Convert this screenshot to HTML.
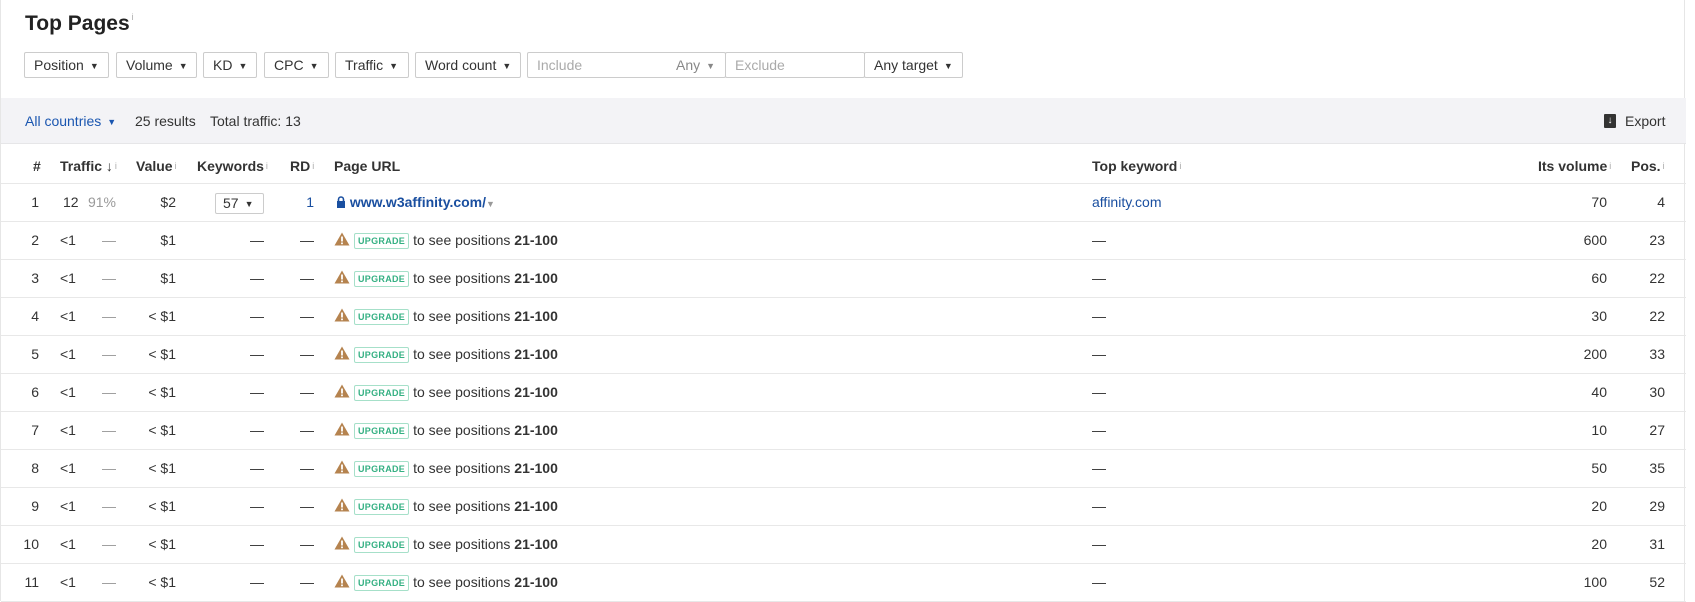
<!DOCTYPE html>
<html><head><meta charset="utf-8">
<style>
*{box-sizing:border-box;margin:0;padding:0}
body{width:1695px;height:601px;overflow:hidden;background:#fff;font-family:"Liberation Sans",Arial,sans-serif;font-size:14px;color:#333;position:relative}
.wrap{position:absolute;left:0;top:0;width:1685px;height:601px;border-left:1px solid #e6e6e6;border-right:1px solid #e6e6e6}
.abs{position:absolute;white-space:nowrap}
h1{position:absolute;left:24px;top:12px;font-size:21px;font-weight:bold;color:#222}
sup.i{font-size:9px;color:#aaa;font-weight:normal;vertical-align:top;margin-left:2px}
.btn{position:absolute;top:52px;height:26px;border:1px solid #ccc;border-radius:2px;line-height:24px;padding-left:9px;color:#333;font-size:14px;background:#fff}
.ar{font-size:9px;margin-left:6px;position:relative;top:-1px}
.band{position:absolute;left:0;top:98px;width:1685px;height:46px;background:#f3f3f6;border-bottom:1px solid #e6e6e8}
.row{position:absolute;left:0;width:1685px;height:38px;border-bottom:1px solid #e8e8e8}
.c{position:absolute;top:0;line-height:37px;white-space:nowrap}
.hd{font-weight:bold;color:#333}
.g{color:#999}
.blue{color:#1a4fa0}
.up{display:inline-block;border:1px solid #a6e0c9;color:#35b083;font-size:9px;font-weight:bold;padding:0 3px;line-height:14px;border-radius:2px;letter-spacing:.3px;vertical-align:1px;margin:0 4px}
.n{right:1647px}.t{left:59px}.p{right:1570px}.v{right:1510px}.k{right:1422px}.r{right:1372px}.u{left:333px}.tk{left:1091px}.iv{right:79px}.ps{right:21px}
</style></head><body>
<svg width="0" height="0" style="position:absolute"><defs><symbol id="w" viewBox="0 0 16 14"><path d="M8 0.5L15.5 13.5H0.5Z" fill="#b5834f"/><rect x="7.1" y="4.5" width="1.8" height="5" fill="#fff"/><rect x="7.1" y="10.5" width="1.8" height="1.7" fill="#fff"/></symbol></defs></svg>
<div class="wrap">
<h1>Top Pages<sup class="i">i</sup></h1>
<div class="btn" style="left:23px;width:85px">Position<span class="ar">▼</span></div>
<div class="btn" style="left:115px;width:81px">Volume<span class="ar">▼</span></div>
<div class="btn" style="left:202px;width:54px">KD<span class="ar">▼</span></div>
<div class="btn" style="left:263px;width:65px">CPC<span class="ar">▼</span></div>
<div class="btn" style="left:334px;width:74px">Traffic<span class="ar">▼</span></div>
<div class="btn" style="left:414px;width:106px">Word count<span class="ar">▼</span></div>
<div class="btn" style="left:526px;width:199px;color:#aaa">Include<span class="abs" style="left:148px;color:#888">Any<span class="ar">▼</span></span></div>
<div class="btn" style="left:724px;width:140px;color:#aaa">Exclude</div>
<div class="btn" style="left:863px;width:99px">Any target<span class="ar">▼</span></div>

<div class="band">
<div class="abs" style="left:24px;top:15px;color:#1a56b0">All countries<span class="ar">▼</span></div>
<div class="abs" style="left:134px;top:15px">25 results</div>
<div class="abs" style="left:209px;top:15px">Total traffic: 13</div>
<div class="abs" style="left:1603px;top:16px;width:12px;height:14px;background:#333;border-radius:1px;color:#fff;font-size:10px;line-height:14px;text-align:center;font-weight:bold">↓</div>
<div class="abs" style="left:1624px;top:15px">Export</div>
</div>

<div class="row hd" style="top:145px;height:39px">
<div class="c" style="left:32px;line-height:42px">#</div>
<div class="c" style="left:59px;line-height:42px">Traffic ↓<sup class="i">i</sup></div>
<div class="c" style="left:135px;line-height:42px">Value<sup class="i">i</sup></div>
<div class="c" style="left:196px;line-height:42px">Keywords<sup class="i">i</sup></div>
<div class="c" style="left:289px;line-height:42px">RD<sup class="i">i</sup></div>
<div class="c" style="left:333px;line-height:42px">Page URL</div>
<div class="c" style="left:1091px;line-height:42px">Top keyword<sup class="i">i</sup></div>
<div class="c" style="left:1537px;line-height:42px">Its volume<sup class="i">i</sup></div>
<div class="c" style="left:1630px;line-height:42px">Pos.<sup class="i">i</sup></div>
</div>

<div class="row" style="top:184px"><div class="c n">1</div><div class="c" style="left:62px">12</div><div class="c g p">91%</div><div class="c v">$2</div>
<div class="abs" style="left:214px;top:9px;width:49px;height:21px;border:1px solid #ccc;border-radius:2px;line-height:19px;padding-left:7px">57<span class="ar">▼</span></div>
<div class="c blue r">1</div>
<div class="c" style="left:335px"><svg width="10" height="12" viewBox="0 0 10 12" style="vertical-align:-1px"><path d="M2.5 5V3.5a2.5 2.5 0 0 1 5 0V5" stroke="#1a4fa0" stroke-width="1.6" fill="none"/><rect x="1" y="5" width="8" height="7" fill="#1a4fa0"/></svg> <b class="blue">www.w3affinity.com/</b><span style="color:#999;font-size:9px">▼</span></div>
<div class="c blue tk">affinity.com</div><div class="c iv">70</div><div class="c ps">4</div></div>

<div class="row" style="top:222px"><div class="c n">2</div><div class="c t">&lt;1</div><div class="c g p">—</div><div class="c v">$1</div><div class="c k">—</div><div class="c r">—</div><div class="c u"><svg width="16" height="14" style="vertical-align:-1px"><use href="#w"/></svg><span class="up">UPGRADE</span>to see positions <b>21-100</b></div><div class="c tk">—</div><div class="c iv">600</div><div class="c ps">23</div></div>
<div class="row" style="top:260px"><div class="c n">3</div><div class="c t">&lt;1</div><div class="c g p">—</div><div class="c v">$1</div><div class="c k">—</div><div class="c r">—</div><div class="c u"><svg width="16" height="14" style="vertical-align:-1px"><use href="#w"/></svg><span class="up">UPGRADE</span>to see positions <b>21-100</b></div><div class="c tk">—</div><div class="c iv">60</div><div class="c ps">22</div></div>
<div class="row" style="top:298px"><div class="c n">4</div><div class="c t">&lt;1</div><div class="c g p">—</div><div class="c v">&lt; $1</div><div class="c k">—</div><div class="c r">—</div><div class="c u"><svg width="16" height="14" style="vertical-align:-1px"><use href="#w"/></svg><span class="up">UPGRADE</span>to see positions <b>21-100</b></div><div class="c tk">—</div><div class="c iv">30</div><div class="c ps">22</div></div>
<div class="row" style="top:336px"><div class="c n">5</div><div class="c t">&lt;1</div><div class="c g p">—</div><div class="c v">&lt; $1</div><div class="c k">—</div><div class="c r">—</div><div class="c u"><svg width="16" height="14" style="vertical-align:-1px"><use href="#w"/></svg><span class="up">UPGRADE</span>to see positions <b>21-100</b></div><div class="c tk">—</div><div class="c iv">200</div><div class="c ps">33</div></div>
<div class="row" style="top:374px"><div class="c n">6</div><div class="c t">&lt;1</div><div class="c g p">—</div><div class="c v">&lt; $1</div><div class="c k">—</div><div class="c r">—</div><div class="c u"><svg width="16" height="14" style="vertical-align:-1px"><use href="#w"/></svg><span class="up">UPGRADE</span>to see positions <b>21-100</b></div><div class="c tk">—</div><div class="c iv">40</div><div class="c ps">30</div></div>
<div class="row" style="top:412px"><div class="c n">7</div><div class="c t">&lt;1</div><div class="c g p">—</div><div class="c v">&lt; $1</div><div class="c k">—</div><div class="c r">—</div><div class="c u"><svg width="16" height="14" style="vertical-align:-1px"><use href="#w"/></svg><span class="up">UPGRADE</span>to see positions <b>21-100</b></div><div class="c tk">—</div><div class="c iv">10</div><div class="c ps">27</div></div>
<div class="row" style="top:450px"><div class="c n">8</div><div class="c t">&lt;1</div><div class="c g p">—</div><div class="c v">&lt; $1</div><div class="c k">—</div><div class="c r">—</div><div class="c u"><svg width="16" height="14" style="vertical-align:-1px"><use href="#w"/></svg><span class="up">UPGRADE</span>to see positions <b>21-100</b></div><div class="c tk">—</div><div class="c iv">50</div><div class="c ps">35</div></div>
<div class="row" style="top:488px"><div class="c n">9</div><div class="c t">&lt;1</div><div class="c g p">—</div><div class="c v">&lt; $1</div><div class="c k">—</div><div class="c r">—</div><div class="c u"><svg width="16" height="14" style="vertical-align:-1px"><use href="#w"/></svg><span class="up">UPGRADE</span>to see positions <b>21-100</b></div><div class="c tk">—</div><div class="c iv">20</div><div class="c ps">29</div></div>
<div class="row" style="top:526px"><div class="c n">10</div><div class="c t">&lt;1</div><div class="c g p">—</div><div class="c v">&lt; $1</div><div class="c k">—</div><div class="c r">—</div><div class="c u"><svg width="16" height="14" style="vertical-align:-1px"><use href="#w"/></svg><span class="up">UPGRADE</span>to see positions <b>21-100</b></div><div class="c tk">—</div><div class="c iv">20</div><div class="c ps">31</div></div>
<div class="row" style="top:564px"><div class="c n">11</div><div class="c t">&lt;1</div><div class="c g p">—</div><div class="c v">&lt; $1</div><div class="c k">—</div><div class="c r">—</div><div class="c u"><svg width="16" height="14" style="vertical-align:-1px"><use href="#w"/></svg><span class="up">UPGRADE</span>to see positions <b>21-100</b></div><div class="c tk">—</div><div class="c iv">100</div><div class="c ps">52</div></div>
</div>
</body></html>
